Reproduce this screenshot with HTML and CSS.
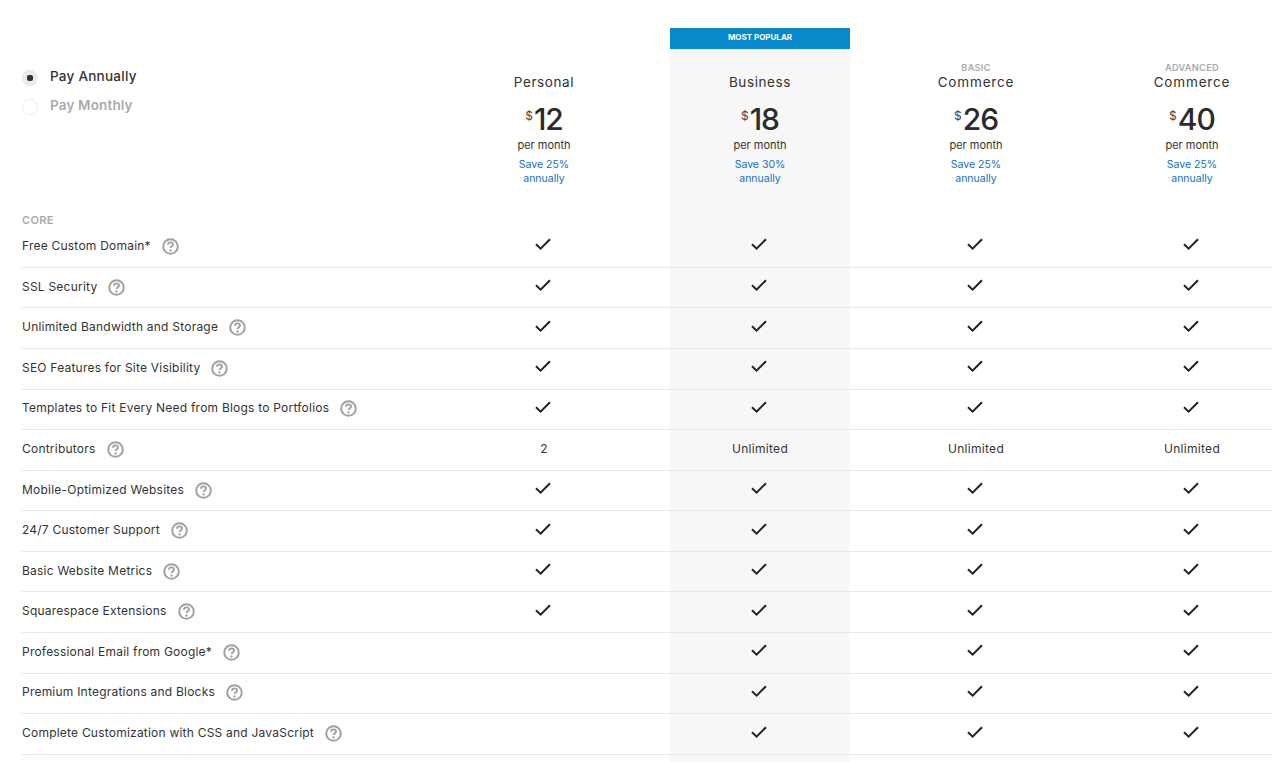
FILE: index.html
```html
<!DOCTYPE html>
<html lang="en">
<head>
<meta charset="utf-8">
<title>Pricing</title>
<link rel="stylesheet" href="styles.css">
</head>
<body>
<svg class="defs" width="0" height="0" aria-hidden="true">
  <symbol id="chk" viewBox="0 0 16 12"><path d="M1 6.2 5.6 10.6 15 1.2" fill="none" stroke="#222" stroke-width="2"/></symbol>
  <symbol id="q" viewBox="0 0 17 17"><circle cx="8.5" cy="8.5" r="7.3" fill="none" stroke="#a0a0a0" stroke-width="2"/><path d="M6 6.8c0-1.5 1.1-2.4 2.5-2.4s2.5.8 2.5 2.2c0 1.9-2.5 1.9-2.5 3.5" fill="none" stroke="#a0a0a0" stroke-width="1.9"/><circle cx="8.5" cy="12.5" r="1.15" fill="#a0a0a0"/></symbol>
</svg>
<main class="page">
  <header class="head">
    <div class="billing">
      <div class="opt on"><span class="radio"><i></i></span>Pay Annually</div>
      <div class="opt off"><span class="radio"></span>Pay Monthly</div>
    </div>
    <div class="plan">
      <div class="tier"></div><div class="name">Personal</div>
      <div class="price"><sup>$</sup>12</div><div class="per">per month</div><div class="save">Save 25%<br>annually</div>
    </div>
    <div class="plan hl">
      <div class="flag">MOST POPULAR</div>
      <div class="tier"></div><div class="name">Business</div>
      <div class="price"><sup>$</sup>18</div><div class="per">per month</div><div class="save">Save 30%<br>annually</div>
    </div>
    <div class="plan">
      <div class="tier">BASIC</div><div class="name wide">Commerce</div>
      <div class="price"><sup>$</sup>26</div><div class="per">per month</div><div class="save">Save 25%<br>annually</div>
    </div>
    <div class="plan">
      <div class="tier">ADVANCED</div><div class="name wide">Commerce</div>
      <div class="price"><sup>$</sup>40</div><div class="per">per month</div><div class="save">Save 25%<br>annually</div>
    </div>
  </header>
  <div class="section"><div class="core">CORE</div><div></div><div class="hl"></div></div>
  <div class="row"><div class="feat">Free Custom Domain*<svg class="q"><use href="#q"/></svg></div><div class="c"><svg class="k"><use href="#chk"/></svg></div><div class="c hl"><svg class="k"><use href="#chk"/></svg></div><div class="c"><svg class="k"><use href="#chk"/></svg></div><div class="c"><svg class="k"><use href="#chk"/></svg></div></div>
  <div class="row"><div class="feat">SSL Security<svg class="q"><use href="#q"/></svg></div><div class="c"><svg class="k"><use href="#chk"/></svg></div><div class="c hl"><svg class="k"><use href="#chk"/></svg></div><div class="c"><svg class="k"><use href="#chk"/></svg></div><div class="c"><svg class="k"><use href="#chk"/></svg></div></div>
  <div class="row"><div class="feat">Unlimited Bandwidth and Storage<svg class="q"><use href="#q"/></svg></div><div class="c"><svg class="k"><use href="#chk"/></svg></div><div class="c hl"><svg class="k"><use href="#chk"/></svg></div><div class="c"><svg class="k"><use href="#chk"/></svg></div><div class="c"><svg class="k"><use href="#chk"/></svg></div></div>
  <div class="row"><div class="feat">SEO Features for Site Visibility<svg class="q"><use href="#q"/></svg></div><div class="c"><svg class="k"><use href="#chk"/></svg></div><div class="c hl"><svg class="k"><use href="#chk"/></svg></div><div class="c"><svg class="k"><use href="#chk"/></svg></div><div class="c"><svg class="k"><use href="#chk"/></svg></div></div>
  <div class="row"><div class="feat">Templates to Fit Every Need from Blogs to Portfolios<svg class="q"><use href="#q"/></svg></div><div class="c"><svg class="k"><use href="#chk"/></svg></div><div class="c hl"><svg class="k"><use href="#chk"/></svg></div><div class="c"><svg class="k"><use href="#chk"/></svg></div><div class="c"><svg class="k"><use href="#chk"/></svg></div></div>
  <div class="row"><div class="feat">Contributors<svg class="q"><use href="#q"/></svg></div><div class="c">2</div><div class="c hl">Unlimited</div><div class="c">Unlimited</div><div class="c">Unlimited</div></div>
  <div class="row"><div class="feat">Mobile-Optimized Websites<svg class="q"><use href="#q"/></svg></div><div class="c"><svg class="k"><use href="#chk"/></svg></div><div class="c hl"><svg class="k"><use href="#chk"/></svg></div><div class="c"><svg class="k"><use href="#chk"/></svg></div><div class="c"><svg class="k"><use href="#chk"/></svg></div></div>
  <div class="row"><div class="feat">24/7 Customer Support<svg class="q"><use href="#q"/></svg></div><div class="c"><svg class="k"><use href="#chk"/></svg></div><div class="c hl"><svg class="k"><use href="#chk"/></svg></div><div class="c"><svg class="k"><use href="#chk"/></svg></div><div class="c"><svg class="k"><use href="#chk"/></svg></div></div>
  <div class="row"><div class="feat">Basic Website Metrics<svg class="q"><use href="#q"/></svg></div><div class="c"><svg class="k"><use href="#chk"/></svg></div><div class="c hl"><svg class="k"><use href="#chk"/></svg></div><div class="c"><svg class="k"><use href="#chk"/></svg></div><div class="c"><svg class="k"><use href="#chk"/></svg></div></div>
  <div class="row"><div class="feat">Squarespace Extensions<svg class="q"><use href="#q"/></svg></div><div class="c"><svg class="k"><use href="#chk"/></svg></div><div class="c hl"><svg class="k"><use href="#chk"/></svg></div><div class="c"><svg class="k"><use href="#chk"/></svg></div><div class="c"><svg class="k"><use href="#chk"/></svg></div></div>
  <div class="row"><div class="feat">Professional Email from Google*<svg class="q"><use href="#q"/></svg></div><div class="c"></div><div class="c hl"><svg class="k"><use href="#chk"/></svg></div><div class="c"><svg class="k"><use href="#chk"/></svg></div><div class="c"><svg class="k"><use href="#chk"/></svg></div></div>
  <div class="row"><div class="feat">Premium Integrations and Blocks<svg class="q"><use href="#q"/></svg></div><div class="c"></div><div class="c hl"><svg class="k"><use href="#chk"/></svg></div><div class="c"><svg class="k"><use href="#chk"/></svg></div><div class="c"><svg class="k"><use href="#chk"/></svg></div></div>
  <div class="row"><div class="feat">Complete Customization with CSS and JavaScript<svg class="q"><use href="#q"/></svg></div><div class="c"></div><div class="c hl"><svg class="k"><use href="#chk"/></svg></div><div class="c"><svg class="k"><use href="#chk"/></svg></div><div class="c"><svg class="k"><use href="#chk"/></svg></div></div>
  <div class="section tail"><div></div><div></div><div class="hl"></div></div>
</main>
</body>
</html>
```
FILE: styles.css
```css
* { box-sizing: border-box; }
html, body { margin: 0; height: 100%; overflow: hidden; background: #fff; }
body { font-family: Inter, "Liberation Sans", sans-serif; color: #333; }
.defs { position: absolute; }
.page { width: 1272px; height: 762px; overflow: hidden; padding-left: 22px; }
.head, .section, .row {
  display: grid;
  grid-template-columns: 414px 216px 216px 216px 216px;
  width: 1278px;
}
.hl { background: #f7f7f7; margin: 0 18px; }
.head { height: 197px; padding-top: 28px; }
.billing { padding-top: 33px; }
.opt { display: flex; align-items: center; height: 29.5px; font-size: 13.5px; font-weight: 500; letter-spacing: .25px; }
.opt.on { color: #333; }
.opt.off { color: #aaa; font-weight: 600; letter-spacing: .15px; }
.radio { width: 16px; height: 16px; border-radius: 50%; margin: 4px 12px 0 0; display: flex; align-items: center; justify-content: center; }
.on .radio { background: #ebebeb; }
.on .radio i { width: 6px; height: 6px; border-radius: 2px; background: #333; }
.off .radio { border: 1px solid #ececec; }
.plan { text-align: center; padding-top: 33px; height: 169px; }
.plan.hl { padding-top: 12px; height: 169px; }
.flag { height: 21px; margin-top: -12px; margin-bottom: 12px; background: #0989cb; color: #fff; font-size: 8px; font-weight: 700; line-height: 18px; }
.tier { height: 14px; font-size: 9.2px; font-weight: 600; line-height: 14px; letter-spacing: .3px; color: #aaa; }
.name { height: 14px; font-size: 13.5px; line-height: 14px; letter-spacing: .6px; color: #333; }
.name.wide { letter-spacing: .85px; }
.price { height: 38px; margin-top: 11px; font-size: 30px; font-weight: 500; line-height: 38px; letter-spacing: -1px; color: #2b2b2b; }
.price sup { font-size: 12px; font-weight: 400; vertical-align: 10px; line-height: 0; margin-right: 1px; letter-spacing: 0; color: #444; }
.per { margin-top: 0; font-size: 11px; line-height: 14px; color: #333; }
.save { margin-top: 6px; font-size: 10.5px; line-height: 14px; color: #1570c4; }
.section { height: 30.15px; }
.core { padding-top: 16px; font-size: 11px; font-weight: 600; letter-spacing: .3px; color: #aaa; line-height: 14px; }
.row { height: 40.6px; border-bottom: 1px solid #e8e8e8; }
.row > * { min-height: 0; }
.feat { display: flex; align-items: center; font-size: 12px; letter-spacing: .22px; color: #333; padding-bottom: 3px; }
.q { width: 17px; height: 17px; margin-left: 11px; margin-top: 2px; }
.c { display: flex; align-items: center; justify-content: center; font-size: 12px; letter-spacing: .3px; color: #333; padding-bottom: 3px; }
.k { width: 16px; height: 12px; margin: 0 2px 2px 0; }
.tail { height: 10px; }
```
